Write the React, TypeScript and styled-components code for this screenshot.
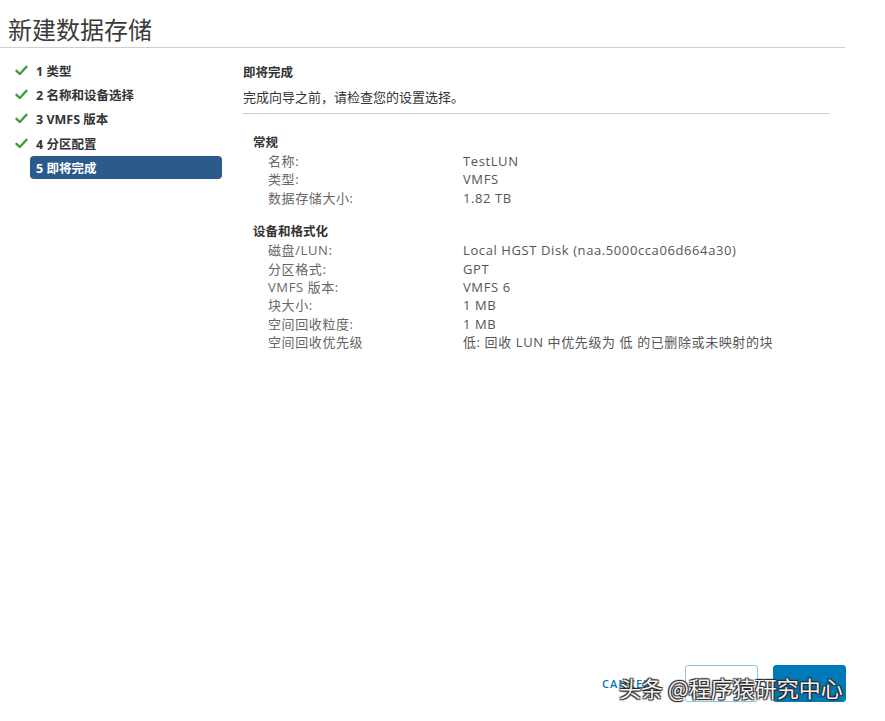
import { createGlobalStyle } from "styled-components";
import styled from "styled-components";

const GlobalStyle = createGlobalStyle`
  html, body {
    margin: 0;
    padding: 0;
    background: #fff;
  }
  body {
    font-family: "Open Sans", "Noto Sans CJK SC", sans-serif;
    color: #565656;
  }
`;

const Page = styled.div`
  position: relative;
  width: 885px;
  height: 721px;
  display: flex;
  flex-direction: column;
  overflow: hidden;
`;

const Header = styled.h1`
  margin: 0;
  width: 845px;
  height: 48px;
  padding: 13px 0 0 8px;
  box-sizing: border-box;
  border-bottom: 1px solid #cfcfcf;
  font-family: "Noto Sans CJK SC", sans-serif;
  font-size: 24px;
  font-weight: 400;
  line-height: 32px;
  color: #3a3a3a;
`;

const Body = styled.div`
  flex: 1;
  display: flex;
  padding-top: 10px;
`;

const Sidebar = styled.ul`
  list-style: none;
  margin: 0;
  padding: 0 0 0 12px;
  width: 243px;
  box-sizing: border-box;
  display: flex;
  flex-direction: column;
`;

const Step = styled.li<{ active?: boolean }>`
  display: flex;
  align-items: center;
  height: 24.3px;
  font-size: 12.5px;
  font-weight: 700;
  color: ${p => (p.active ? "#fff" : "#333")};
`;

const CheckSlot = styled.span`
  width: 18px;
  margin-right: 6px;
  display: flex;
  align-items: center;
  justify-content: center;
`;

const StepLabel = styled.span<{ active?: boolean }>`
  flex: 1;
  height: 23px;
  display: flex;
  align-items: center;
  padding-left: 6px;
  margin-left: -6px;
  margin-right: 21px;
  border-radius: 4px;
  background: ${p => (p.active ? "#2b5a8b" : "transparent")};
`;

const Content = styled.div`
  flex: 1;
  padding-right: 55px;
  padding-top: 5px;
`;

const Intro = styled.div`
  padding-bottom: 6px;
  border-bottom: 1px solid #cfcfcf;
`;

const IntroTitle = styled.div`
  font-size: 12.5px;
  font-weight: 700;
  color: #333;
  line-height: 20px;
`;

const IntroText = styled.div`
  font-size: 13px;
  color: #333;
  line-height: 20px;
  margin-top: 4px;
`;

const Section = styled.section<{ first?: boolean }>`
  padding-left: 10px;
  margin-top: ${p => (p.first ? "20px" : "16px")};
`;

const SectionTitle = styled.div`
  font-size: 12.5px;
  font-weight: 700;
  color: #333;
  line-height: 18px;
`;

const Row = styled.div`
  display: grid;
  grid-template-columns: 195px 1fr;
  padding-left: 15px;
  font-size: 13px;
  letter-spacing: 0.6px;
  line-height: 18.4px;
`;

const Label = styled.span`
  color: #666;
`;

const Value = styled.span`
  color: #555;
`;

const Footer = styled.div`
  display: flex;
  align-items: center;
  justify-content: flex-end;
  gap: 15px;
  padding: 0 39px 19px 0;
`;

const LinkButton = styled.button`
  border: none;
  background: none;
  color: #0079b8;
  font-family: "Open Sans", sans-serif;
  font-size: 11px;
  font-weight: 600;
  letter-spacing: 1px;
  margin-right: 20px;
  padding: 0;
`;

const Button = styled.button<{ primary?: boolean }>`
  width: 73px;
  height: 37px;
  border-radius: 3px;
  border: 1px solid ${p => (p.primary ? "#0079b8" : "#8dc7e0")};
  background: ${p => (p.primary ? "#0079b8" : "#fff")};
`;

const Watermark = styled.div`
  position: absolute;
  left: 619px;
  top: 673px;
  font-family: "Noto Sans CJK SC", sans-serif;
  font-size: 22px;
  line-height: 28px;
  color: #f2f2f2;
  text-shadow: 1px 1px 1px #2a2a2a, -1px -1px 1px #2a2a2a, 1px -1px 1px #2a2a2a,
    -1px 1px 1px #2a2a2a;
  white-space: nowrap;
`;

const Check = () => (
  <svg width="13" height="11" viewBox="0 0 13 11">
    <path d="M1.5 5.8 L4.8 9 L11.5 1.8" fill="none" stroke="#3f9b3a" strokeWidth="2.4" strokeLinecap="round" strokeLinejoin="round" />
  </svg>
);

const steps = ["1 类型", "2 名称和设备选择", "3 VMFS 版本", "4 分区配置", "5 即将完成"];

const general = [
  ["名称:", "TestLUN"],
  ["类型:", "VMFS"],
  ["数据存储大小:", "1.82 TB"],
];

const device = [
  ["磁盘/LUN:", "Local HGST Disk (naa.5000cca06d664a30)"],
  ["分区格式:", "GPT"],
  ["VMFS 版本:", "VMFS 6"],
  ["块大小:", "1 MB"],
  ["空间回收粒度:", "1 MB"],
  ["空间回收优先级", "低: 回收 LUN 中优先级为 低 的已删除或未映射的块"],
];

export default function App() {
  return (
    <Page>
      <GlobalStyle />
      <Header>新建数据存储</Header>
      <Body>
        <Sidebar>
          {steps.map((s, i) => {
            const active = i === steps.length - 1;
            return (
              <Step key={s} active={active}>
                <CheckSlot>{!active && <Check />}</CheckSlot>
                <StepLabel active={active}>{s}</StepLabel>
              </Step>
            );
          })}
        </Sidebar>
        <Content>
          <Intro>
            <IntroTitle>即将完成</IntroTitle>
            <IntroText>完成向导之前，请检查您的设置选择。</IntroText>
          </Intro>
          <Section first>
            <SectionTitle>常规</SectionTitle>
            {general.map(([k, v]) => (
              <Row key={k}>
                <Label>{k}</Label>
                <Value>{v}</Value>
              </Row>
            ))}
          </Section>
          <Section>
            <SectionTitle>设备和格式化</SectionTitle>
            {device.map(([k, v]) => (
              <Row key={k}>
                <Label>{k}</Label>
                <Value>{v}</Value>
              </Row>
            ))}
          </Section>
        </Content>
      </Body>
      <Footer>
        <LinkButton>CANCEL</LinkButton>
        <Button />
        <Button primary />
      </Footer>
      <Watermark>头条 @程序猿研究中心</Watermark>
    </Page>
  );
}
